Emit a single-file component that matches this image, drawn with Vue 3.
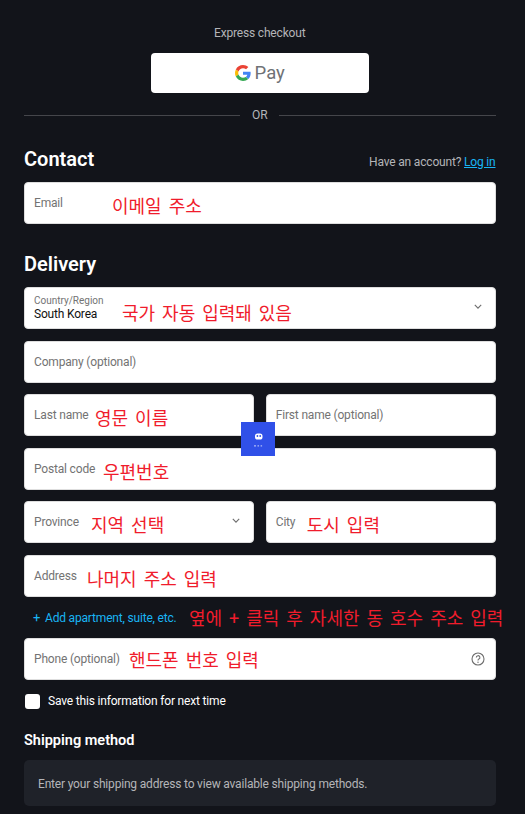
<script setup>
const hint = '옆에 + 클릭 후 자세한 동 호수 주소 입력'
</script>

<template>
  <div class="page">
    <p class="express">Express checkout</p>
    <button class="gpay" type="button">
      <svg class="g-logo" viewBox="0 0 48 48" width="16" height="16">
        <path fill="#EA4335" d="M24 9.5c3.54 0 6.71 1.22 9.21 3.6l6.85-6.85C35.9 2.38 30.47 0 24 0 14.62 0 6.51 5.38 2.56 13.22l7.98 6.19C12.43 13.72 17.74 9.5 24 9.5z" />
        <path fill="#4285F4" d="M46.98 24.55c0-1.57-.15-3.09-.38-4.55H24v9.02h12.94c-.58 2.96-2.26 5.48-4.78 7.18l7.73 6c4.51-4.18 7.09-10.36 7.09-17.65z" />
        <path fill="#FBBC05" d="M10.53 28.59c-.48-1.45-.76-2.99-.76-4.59s.27-3.14.76-4.59l-7.98-6.19C.92 16.46 0 20.12 0 24c0 3.88.92 7.54 2.56 10.78l7.97-6.19z" />
        <path fill="#34A853" d="M24 48c6.48 0 11.93-2.13 15.89-5.81l-7.73-6c-2.15 1.45-4.92 2.3-8.16 2.3-6.26 0-11.57-4.22-13.47-9.91l-7.98 6.19C6.51 42.62 14.62 48 24 48z" />
      </svg>
      <span>Pay</span>
    </button>
    <div class="or"><span>OR</span></div>

    <div class="contact-head">
      <h2>Contact</h2>
      <p>Have an account? <a href="#">Log in</a></p>
    </div>
    <div class="field">
      <span class="ph">Email</span>
      <span class="note" style="left: 87px">이메일 주소</span>
    </div>

    <h2 class="delivery">Delivery</h2>
    <div class="form">
      <div class="field">
        <div class="stack">
          <span class="small">Country/Region</span>
          <span class="value">South Korea</span>
        </div>
        <span class="note" style="left: 97px; top: 14px">국가 자동 입력돼 있음</span>
        <svg class="chev" viewBox="0 0 10 6" width="8" height="5"><path d="M1 1l4 4 4-4" /></svg>
      </div>
      <div class="field"><span class="ph">Company (optional)</span></div>
      <div class="row">
        <div class="field">
          <span class="ph">Last name</span>
          <span class="note" style="left: 70px">영문 이름</span>
        </div>
        <div class="field"><span class="ph">First name (optional)</span></div>
      </div>
      <div class="field">
        <span class="ph">Postal code</span>
        <span class="note" style="left: 78px">우편번호</span>
      </div>
      <div class="row">
        <div class="field">
          <span class="ph">Province</span>
          <span class="note" style="left: 66px">지역 선택</span>
          <svg class="chev" viewBox="0 0 10 6" width="8" height="5"><path d="M1 1l4 4 4-4" /></svg>
        </div>
        <div class="field">
          <span class="ph">City</span>
          <span class="note" style="left: 40px">도시 입력</span>
        </div>
      </div>
      <div class="field">
        <span class="ph">Address</span>
        <span class="note" style="left: 62px">나머지 주소 입력</span>
      </div>
    </div>

    <div class="add">
      <a href="#"><b>+</b> Add apartment, suite, etc.</a>
      <span class="note add-note">{{ hint }}</span>
    </div>

    <div class="field">
      <span class="ph">Phone (optional)</span>
      <span class="note" style="left: 104px; top: 10px">핸드폰 번호 입력</span>
      <svg class="help" viewBox="0 0 14 14" width="14" height="14">
        <circle cx="7" cy="7" r="6" />
        <path d="M5.3 5.5a1.8 1.8 0 1 1 2.6 1.6c-.6.3-.9.7-.9 1.3" />
        <circle class="dot" cx="7" cy="10.3" r=".7" />
      </svg>
    </div>

    <label class="save">
      <span class="box"></span>
      <span>Save this information for next time</span>
    </label>

    <h3>Shipping method</h3>
    <div class="shipping">Enter your shipping address to view available shipping methods.</div>

    <div class="badge">
      <svg viewBox="0 0 34 34" width="34" height="34">
        <rect x="14" y="11.5" width="7.5" height="6" rx="2.6" fill="#fff" />
        <circle cx="16.4" cy="14" r=".9" fill="#3050e8" />
        <circle cx="19.2" cy="14" r=".9" fill="#3050e8" />
        <rect x="13" y="23.4" width="2" height="1" fill="#cfd6fa" />
        <rect x="16.5" y="23.4" width="1.5" height="1" fill="#cfd6fa" />
        <rect x="19.6" y="23.4" width="1.5" height="1" fill="#cfd6fa" />
      </svg>
    </div>
  </div>
</template>

<style scoped>
.page {
  position: relative;
  box-sizing: border-box;
  width: 525px;
  height: 814px;
  overflow: hidden;
  padding: 25px 29.5px 0 24px;
  font-family: Roboto, "Noto Sans CJK KR", sans-serif;
  font-size: 12px;
  letter-spacing: -0.18px;
  color: #fff;
  background: #12141a;
}

.express {
  margin: 0;
  height: 16px;
  line-height: 16px;
  text-align: center;
  color: #b4b5b8;
}

.gpay {
  display: flex;
  align-items: center;
  justify-content: center;
  gap: 4px;
  width: 218px;
  height: 40px;
  margin: 12px auto 0;
  padding: 0;
  border: none;
  border-radius: 4px;
  background: #fff;
  font-family: inherit;
  font-size: 18.5px;
  color: #6f7276;
}

.or {
  display: flex;
  align-items: center;
  gap: 12px;
  height: 16px;
  margin-top: 14px;
  color: #b4b5b8;
}

.or::before,
.or::after {
  content: "";
  flex: 1;
  height: 1px;
  background: #45464b;
}

.contact-head {
  display: flex;
  align-items: flex-end;
  justify-content: space-between;
  height: 28px;
  margin-top: 22px;
}

h2 {
  margin: 0;
  font-size: 20px;
  font-weight: 600;
  letter-spacing: 0;
  line-height: 28px;
}

.contact-head p {
  margin: 0 0 2px;
  line-height: 18px;
  color: #b4b5b8;
}

a {
  color: #19b5f5;
}

.field {
  position: relative;
  box-sizing: border-box;
  display: flex;
  align-items: center;
  height: 42px;
  padding: 0 9px;
  border: 1px solid #dedede;
  border-radius: 4px;
  background: #fff;
}

.row .field {
  flex: 1;
}

.contact-head + .field {
  margin-top: 9px;
}

.ph {
  color: #737373;
}

.stack {
  display: flex;
  flex-direction: column;
  margin-top: 1px;
}

.small {
  font-size: 10px;
  line-height: 12px;
  letter-spacing: 0;
  color: #737373;
}

.value {
  line-height: 15px;
  color: #111;
}

.note {
  position: absolute;
  top: 12px;
  font-size: 18px;
  line-height: 24px;
  letter-spacing: 0;
  word-spacing: 2.5px;
  color: #f01c2c;
  white-space: nowrap;
}

.chev {
  position: absolute;
  right: 13px;
  top: 16px;
  fill: none;
  stroke: #6e6e6e;
  stroke-width: 1.4;
}

.delivery {
  margin-top: 26px;
  margin-bottom: 9px;
}

.form {
  display: flex;
  flex-direction: column;
  gap: 11.5px;
}

.row {
  display: flex;
  gap: 12px;
}

.add {
  position: relative;
  height: 41.5px;
  line-height: 41px;
  padding-left: 9px;
}

.add a {
  text-decoration: none;
}

.add b {
  font-weight: 400;
  margin-right: 2px;
  font-size: 13px;
}

.add-note {
  left: 165px;
  top: 10.5px;
}

.help {
  position: absolute;
  right: 10px;
  top: 12.5px;
  fill: none;
  stroke: #6e6e6e;
  stroke-width: 1.1;
}

.help .dot {
  fill: #6e6e6e;
  stroke: none;
}

.save {
  display: flex;
  align-items: center;
  gap: 8px;
  margin: 13px 0 0 1px;
  height: 16px;
}

.box {
  width: 15px;
  height: 15px;
  border-radius: 3px;
  background: #fff;
}

h3 {
  margin: 21.5px 0 0;
  font-size: 14.5px;
  font-weight: 600;
  letter-spacing: 0;
  line-height: 20px;
}

.shipping {
  box-sizing: border-box;
  height: 46.5px;
  margin-top: 9px;
  padding: 0 14px;
  line-height: 48px;
  border-radius: 5px;
  background: #1f2229;
  color: #b4b5b8;
  white-space: nowrap;
}

.badge {
  position: absolute;
  left: 241px;
  top: 422px;
  width: 34px;
  height: 34px;
  background: #3050e8;
}
</style>

<style>
html,
body {
  margin: 0;
  background: #12141a;
}
</style>
